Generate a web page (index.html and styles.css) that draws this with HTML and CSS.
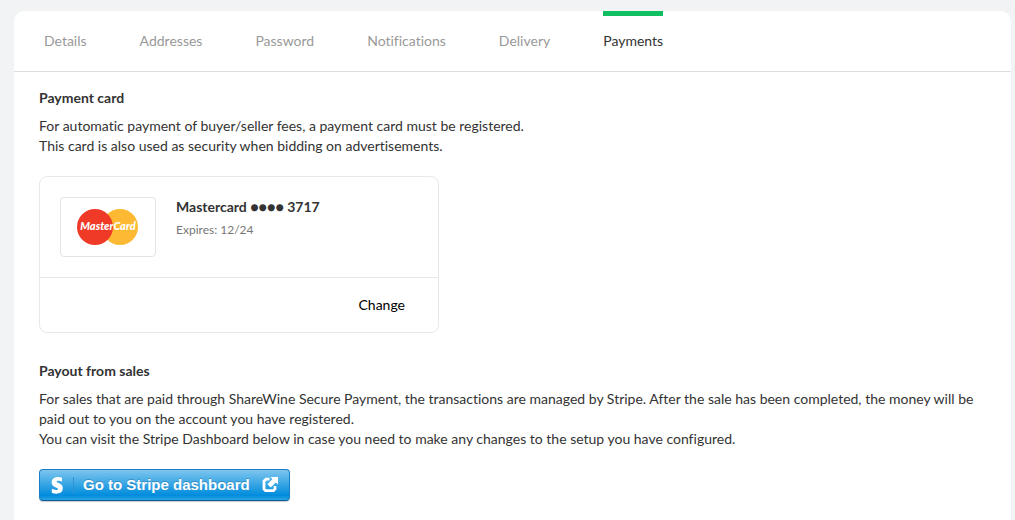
FILE: index.html
```html
<!doctype html>
<html lang="en">
    <head>
        <meta charset="utf-8">
        <meta name="viewport" content="width=device-width, initial-scale=1">
        <title>Payments</title>
        <link rel="stylesheet" href="styles.css">
    </head>

    <body>
        <div class="panel">
            <nav class="tabs">
                <a href="#">Details</a>
                <a href="#">Addresses</a>
                <a href="#">Password</a>
                <a href="#">Notifications</a>
                <a href="#">Delivery</a>
                <a href="#" class="active">Payments</a>
            </nav>

            <main class="content">
                <section class="payment">
                    <h2>Payment card</h2>
                    <p>For automatic payment of buyer/seller fees, a payment card must be registered.<br>
                    This card is also used as security when bidding on advertisements.</p>

                    <div class="card">
                        <div class="card-info">
                            <div class="card-logo">
                                <svg width="62" height="36" viewBox="0 0 62 36" role="img" aria-label="MasterCard">
                                    <circle cx="43" cy="18" r="18" fill="#fdb933"/>
                                    <circle cx="18" cy="18" r="18" fill="#f03a28"/>
                                    <text x="31" y="21" text-anchor="middle" class="logo-text">MasterCard</text>
                                </svg>
                            </div>
                            <div>
                                <div class="card-number">Mastercard ●●●● 3717</div>
                                <div class="card-expires">Expires: 12/24</div>
                            </div>
                        </div>
                        <div class="card-actions">
                            <button type="button" class="change">Change</button>
                        </div>
                    </div>
                </section>

                <section>
                    <h2>Payout from sales</h2>
                    <p>For sales that are paid through ShareWine Secure Payment, the transactions are managed by Stripe. After the sale has been completed, the money will be paid out to you on the account you have registered.<br>
                    You can visit the Stripe Dashboard below in case you need to make any changes to the setup you have configured.</p>

                    <a href="#" class="stripe">
                        <span class="stripe-logo">
                            <svg width="12" height="17" viewBox="0 0 12 17">
                                <path d="M11 0.8V4.6C9.3 3.9 5.6 3.2 5.6 4.8C5.6 6.3 11.8 6 11.8 11C11.8 17.4 4.6 17.4 0.8 15.7V11.8C3 12.9 7 13.7 7 12C7 10.2 0.7 10.7 0.7 5.5C0.7 -0.3 7.4 -0.6 11 0.8Z" fill="#fff"/>
                            </svg>
                        </span>
                        <span class="stripe-text">Go to Stripe dashboard</span>
                        <svg width="16" height="16" viewBox="0 0 16 16" fill="none">
                            <path d="M7.5 2.2H4L2 4.2V12L3.5 13.6H11.5L13 12V9" stroke="#fff" stroke-width="2.8"/>
                            <path d="M8.5 0H16V7.5L13.8 5.6L8.8 10.6L5.4 7.2L10.4 2.2Z" fill="#fff"/>
                        </svg>
                    </a>
                </section>
            </main>
        </div>
    </body>
</html>
```

FILE: styles.css
```css
* {
    box-sizing: border-box;
}

body {
    margin: 0;
    padding: 11px 4px 0 14px;
    background-color: #f2f3f5;
    font-family: Lato, "Liberation Sans", sans-serif;
    font-size: 14px;
    font-variant-ligatures: none;
    line-height: 20px;
    color: #333;
}

.panel {
    min-height: calc(100vh - 11px);
    background-color: #fff;
    border-radius: 10px 10px 0 0;
}

.tabs {
    display: flex;
    gap: 53px;
    padding: 0 30px;
    border-bottom: 1px solid #dcdfdf;
}

.tabs a {
    padding: 15px 0 20px;
    border-top: 5px solid transparent;
    color: #999;
    text-decoration: none;
}

.tabs .active {
    border-top-color: #0fbf61;
    color: #333;
}

.content {
    padding: 16px 25px 19px;
}

.payment {
    margin-bottom: 28px;
}

h2 {
    margin: 0 0 8px;
    font-size: 14px;
    font-weight: 700;
}

p {
    margin: 0 0 20px;
}

.card {
    max-width: 400px;
    border: 1px solid #e8e8e8;
    border-radius: 8px;
}

.card-info {
    display: flex;
    gap: 20px;
    padding: 20px;
}

.card-logo {
    display: flex;
    align-items: center;
    justify-content: center;
    width: 96px;
    height: 60px;
    border: 1px solid #e4e4e4;
    border-radius: 4px;
}

.logo-text {
    font-size: 11px;
    font-weight: 900;
    font-style: italic;
    fill: #fff;
}

.card-number {
    margin-bottom: 3px;
    font-weight: 700;
}

.card-expires {
    font-size: 12px;
    color: #777;
}

.card-actions {
    display: flex;
    justify-content: flex-end;
    padding: 17px 33px;
    border-top: 1px solid #e8e8e8;
}

.change {
    padding: 0;
    border: none;
    background: none;
    font: inherit;
    color: #000;
    cursor: pointer;
}

.stripe {
    display: inline-flex;
    align-items: center;
    height: 32px;
    padding: 0 11px;
    border: 1px solid #1a7fc4;
    border-bottom-color: #055e98;
    border-radius: 4px;
    background: linear-gradient(#7dc5ee, #008cdd 85%, #30a2e4);
    box-shadow: 0 1px 1px rgba(0, 0, 0, 0.2);
    color: #fff;
    font-family: "Liberation Sans", Arial, sans-serif;
    font-size: 15px;
    font-weight: 700;
    text-decoration: none;
    text-shadow: 0 -1px 0 rgba(0, 0, 0, 0.2);
}

.stripe-logo {
    display: flex;
    padding-right: 10px;
    border-right: 1px solid #3092cf;
}

.stripe-text {
    margin: 0 12px 0 9px;
}
```
